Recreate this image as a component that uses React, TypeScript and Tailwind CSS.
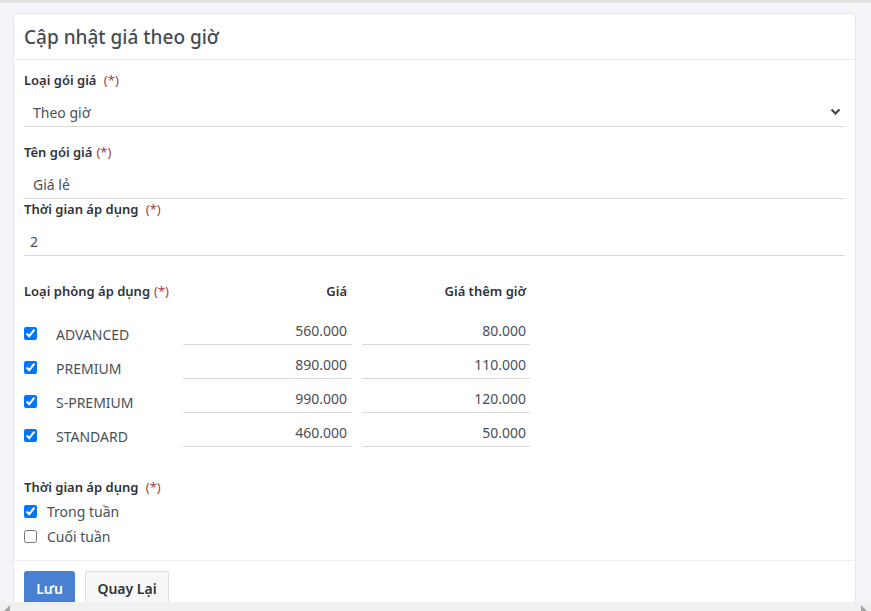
import React from "react";

const font = { fontFamily: '"Segoe UI", "Noto Sans", "Open Sans", sans-serif' };

function Req() {
  return <span className="font-normal text-[#a0403f] ml-1">(*)</span>;
}

const rooms = [
  { name: "ADVANCED", price: "560.000", extra: "80.000" },
  { name: "PREMIUM", price: "890.000", extra: "110.000" },
  { name: "S-PREMIUM", price: "990.000", extra: "120.000" },
  { name: "STANDARD", price: "460.000", extra: "50.000" },
];

export default function App() {
  return (
    <div className="min-h-screen bg-[#f4f5f9] border-t-[3px] border-[#e2e2e2]" style={font}>
      <div className="pt-[10px] pl-[13px] pr-[15px]">
        <div className="bg-white border border-[#e6e7eb] rounded-[4px]">
          <div className="h-[46px] flex items-center px-[10px] pt-[2px] border-b border-[#e9eaec]">
            <h1 className="text-[19px] font-medium text-[#484c52] leading-none">Cập nhật giá theo giờ</h1>
          </div>
          <div className="px-[10px] pt-[10px] pb-[11px] border-b border-[#eeeeee]">
            <div className="text-[13px] font-semibold text-[#2f3338] h-[20px] leading-[20px]">
              Loại gói giá <Req />
            </div>
            <div className="relative mt-[8px] h-[29px] border-b border-[#d9d9d9] flex items-center">
              <span className="pl-[9px] text-[14px] text-[#495057]">Theo giờ</span>
              <svg className="absolute right-[4px] top-[10px]" width="11" height="8" viewBox="0 0 11 8">
                <path d="M1.5 1.5 L5.5 5.5 L9.5 1.5" fill="none" stroke="#444" strokeWidth="2.2" />
              </svg>
            </div>

            <div className="mt-[15px] text-[13px] font-semibold text-[#2f3338] h-[20px] leading-[20px]">
              Tên gói giá<Req />
            </div>
            <div className="mt-[8px] h-[29px] border-b border-[#d9d9d9] flex items-center">
              <span className="pl-[9px] text-[14px] text-[#495057]">Giá lẻ</span>
            </div>

            <div className="text-[13px] font-semibold text-[#2f3338] h-[20px] leading-[20px]">
              Thời gian áp dụng <Req />
            </div>
            <div className="mt-[8px] h-[29px] border-b border-[#d9d9d9] flex items-center">
              <span className="pl-[6px] text-[14px] text-[#495057]">2</span>
            </div>

            <div className="mt-[25px] grid grid-cols-[149px_169px_168px] gap-x-[10px]">
              <div className="text-[13px] font-semibold text-[#2f3338] h-[20px] leading-[20px] whitespace-nowrap">
                Loại phòng áp dụng<Req />
              </div>
              <div className="text-[13px] font-semibold text-[#2f3338] h-[20px] leading-[20px] text-right pr-[5px]">Giá</div>
              <div className="text-[13px] font-semibold text-[#2f3338] h-[20px] leading-[20px] text-right pr-[4px]">Giá thêm giờ</div>
            </div>
            <div className="mt-[16px] flex flex-col">
              {rooms.map((r) => (
                <div key={r.name} className="grid grid-cols-[149px_169px_168px] gap-x-[10px] h-[34px]">
                  <div className="flex items-center h-[34px] -mt-[1px]">
                    <input type="checkbox" defaultChecked className="m-0 w-[13px] h-[13px]" />
                    <span className="ml-[19px] text-[14px] text-[#495057] mt-[3px]">{r.name}</span>
                  </div>
                  <div className="h-[28px] border-b border-[#d9d9d9] flex items-center justify-end pr-[5px] text-[14px] text-[#495057]">
                    {r.price}
                  </div>
                  <div className="h-[28px] border-b border-[#d9d9d9] flex items-center justify-end pr-[4px] text-[14px] text-[#495057]">
                    {r.extra}
                  </div>
                </div>
              ))}
            </div>

            <div className="mt-[24px] text-[13px] font-semibold text-[#2f3338] h-[20px] leading-[20px]">
              Thời gian áp dụng <Req />
            </div>
            <div className="flex flex-col mt-[2px]">
              <label className="h-[25px] flex items-center">
                <input type="checkbox" defaultChecked className="m-0 w-[13px] h-[13px]" />
                <span className="ml-[10px] text-[14px] text-[#495057]">Trong tuần</span>
              </label>
              <label className="h-[25px] flex items-center">
                <input type="checkbox" className="m-0 w-[13px] h-[13px]" />
                <span className="ml-[10px] text-[14px] text-[#495057]">Cuối tuần</span>
              </label>
            </div>
          </div>
          <div className="px-[10px] pt-[10px] pb-[12px] flex gap-[10px]">
            <button className="h-[36px] w-[51px] rounded-[3px] bg-[#4a80d2] text-white text-[14px] font-semibold pb-[2px]">Lưu</button>
            <button className="h-[36px] w-[84px] rounded-[3px] bg-[#f7f7f7] border border-[#dcdcdc] text-[#333] text-[14px] font-semibold pb-[2px]">Quay Lại</button>
          </div>
        </div>
      </div>
      <div className="fixed left-0 right-0 bottom-0 h-[9px] bg-[#f0f0f0]">
        <svg className="absolute left-[4px] top-[3px]" width="6" height="6" viewBox="0 0 6 6"><path d="M6 0 L6 6 L0 6 Z" fill="#a3a3a3" /></svg>
        <svg className="absolute right-[4px] top-[3px]" width="6" height="6" viewBox="0 0 6 6"><path d="M0 0 L6 6 L0 6 Z" fill="#a3a3a3" /></svg>
      </div>
    </div>
  );
}
